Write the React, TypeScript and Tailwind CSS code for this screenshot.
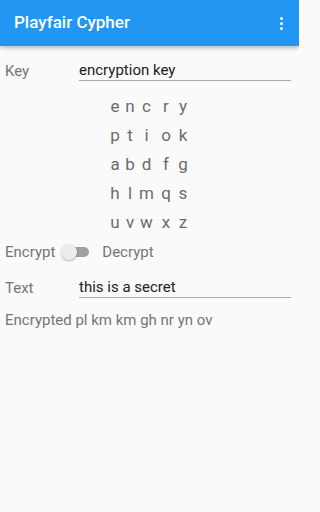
import React from "react";

const grid = [
  ["e", "n", "c", "r", "y"],
  ["p", "t", "i", "o", "k"],
  ["a", "b", "d", "f", "g"],
  ["h", "l", "m", "q", "s"],
  ["u", "v", "w", "x", "z"],
];

export default function App() {
  return (
    <div className="w-full min-h-screen bg-[#fafafa]" style={{ fontFamily: "Roboto, 'Noto Sans', sans-serif" }}>
      <div className="w-[299px] h-[512px] overflow-hidden bg-[#fafafa]">
        <div className="h-[46px] bg-[#2196F3] flex items-center justify-between pl-[14px] pr-[16px] shadow-[0_2px_4px_rgba(0,0,0,0.25)] relative">
          <span className="text-white text-[17px] font-medium">Playfair Cypher</span>
          <div className="flex flex-col gap-[2px] items-center">
            <span className="w-[3px] h-[3px] rounded-full bg-white" />
            <span className="w-[3px] h-[3px] rounded-full bg-white" />
            <span className="w-[3px] h-[3px] rounded-full bg-white" />
          </div>
        </div>

        <div className="flex items-end pt-[14px] pl-[5px]">
          <div className="w-[74px] text-[15px] leading-[20px] text-[#757575]">Key</div>
          <div className="w-[212px] text-[15px] leading-[20px] text-[#212121] border-b border-[#a8a8a8]">encryption key</div>
        </div>

        <div className="mt-[11px] ml-[107px] grid grid-cols-[16px_14px_19px_20px_14px] text-[17px] leading-[29px] text-[#6b6b6b]">
          {grid.flat().map((c, i) => (
            <div key={i} className="text-center">{c}</div>
          ))}
        </div>

        <div className="mt-[3px] h-[24px] flex items-center pl-[5px] text-[15px] text-[#757575]">
          <span>Encrypt</span>
          <div className="relative ml-[6px] w-[28px] h-[16px] flex items-center">
            <div className="absolute left-[6px] w-[22px] h-[10px] rounded-full bg-[#a0a0a0]" />
            <div className="absolute left-0 w-[16px] h-[16px] rounded-full bg-[#ececec] shadow-[0_1px_2px_rgba(0,0,0,0.3)]" />
          </div>
          <span className="ml-[13px]">Decrypt</span>
        </div>

        <div className="flex items-end pt-[13px] pl-[5px]">
          <div className="w-[74px] text-[15px] leading-[20px] text-[#757575]">Text</div>
          <div className="w-[212px] text-[15px] leading-[20px] text-[#212121] border-b border-[#a8a8a8]">this is a secret</div>
        </div>

        <div className="mt-[12px] pl-[5px] text-[15px] leading-[20px] text-[#757575]">
          Encrypted pl km km gh nr yn ov
        </div>
      </div>
    </div>
  );
}
